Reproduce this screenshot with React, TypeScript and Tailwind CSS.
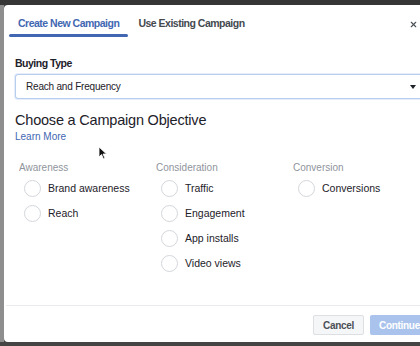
import { X } from 'lucide-react';

const columns = [
  { title: 'Awareness', items: ['Brand awareness', 'Reach'] },
  { title: 'Consideration', items: ['Traffic', 'Engagement', 'App installs', 'Video views'] },
  { title: 'Conversion', items: ['Conversions'] },
];

function Radio({ label }: { label: string }) {
  return (
    <label className="flex h-[25px] items-center pl-[5px]">
      <span className="h-[17px] w-[17px] shrink-0 rounded-full border border-[#d3d6db] bg-white" />
      <span className="ml-[7px] text-[10.5px] text-[#1d2129]">{label}</span>
    </label>
  );
}

export default function App() {
  return (
    <div
      className="relative flex h-[346px] w-[420px] flex-col overflow-hidden bg-[#444444]"
      style={{ fontFamily: '"Liberation Sans", Arial, sans-serif' }}
    >
      <div className="h-[5px] shrink-0 bg-[#363636]" />
      <div className="flex h-[337px] shrink-0">
        <div className="w-[4px] shrink-0 bg-[#8e8e8e]" />
        <div className="flex flex-1 flex-col rounded-l-[4px] bg-white">
          <div className="flex h-[32px] shrink-0 items-end pl-[5px]">
            <button className="flex h-full flex-col justify-end">
              <span className="px-[9px] pb-[5px] text-[10.5px] font-bold leading-[12px] tracking-[-0.5px] text-[#4267b2]">
                Create New Campaign
              </span>
              <span className="h-[3px] rounded-full bg-[#4267b2]" />
            </button>
            <button className="flex h-full items-end px-[10px] pb-[8px] text-[10.5px] font-bold leading-[12px] tracking-[-0.5px] text-[#444950]">
              Use Existing Campaign
            </button>
            <X className="mb-[8px] ml-auto mr-[2px] h-[9px] w-[9px] text-[#4b4f56]" strokeWidth={3} />
          </div>

          <div className="flex flex-1 flex-col pl-[11px]">
            <div className="mt-[19px] text-[10.5px] font-bold leading-[14px] tracking-[-0.5px] text-[#1d2129]">
              Buying Type
            </div>
            <div className="mt-[4px] flex h-[25px] shrink-0 items-center rounded-l-[3px] border border-r-0 border-[#b9cdef] pl-[10px] pr-[4px] shadow-[0_0_0_1px_#e6eefb]">
              <span className="text-[10px] tracking-[-0.2px] text-[#1d2129]">Reach and Frequency</span>
              <span className="ml-auto h-0 w-0 border-x-[3.5px] border-t-[4px] border-x-transparent border-t-[#1d2129]" />
            </div>
            <h2 className="mt-[12px] text-[14.5px] leading-[19px] tracking-[-0.2px] text-[#1d2129]">
              Choose a Campaign Objective
            </h2>
            <a className="text-[10px] leading-[14px] text-[#4267b2]">Learn More</a>

            <div className="mt-[17px] grid grid-cols-[137px_137px_1fr] pl-[4px]">
              {columns.map((col) => (
                <div key={col.title}>
                  <div className="mb-[1px] text-[10px] leading-[14px] text-[#90949c]">{col.title}</div>
                  {col.items.map((item) => (
                    <Radio key={item} label={item} />
                  ))}
                </div>
              ))}
            </div>

            <div className="-ml-[9px] mt-auto flex h-[37px] shrink-0 items-start border-t border-[#e9ebee] pt-[9px]">
              <div className="ml-auto flex gap-[6px]">
                <button className="h-[20px] rounded-[2px] border border-[#dddfe2] bg-[#f5f6f7] px-[9px] text-[10px] font-bold tracking-[-0.3px] text-[#4b4f56]">
                  Cancel
                </button>
                <button className="h-[20px] w-[50px] rounded-l-[2px] bg-[#a9c3ec] pl-[9px] text-left text-[10px] font-bold tracking-[-0.3px] text-white">
                  Continue
                </button>
              </div>
            </div>
          </div>
        </div>
      </div>

      <svg className="absolute left-[98px] top-[146px]" width="10" height="14" viewBox="0 0 10 14">
        <path d="M1 1 L1 11 L3.5 8.5 L5.5 13 L7 12.3 L5 8 L8.5 8 Z" fill="#111" stroke="#fff" strokeWidth="0.8" />
      </svg>
    </div>
  );
}
